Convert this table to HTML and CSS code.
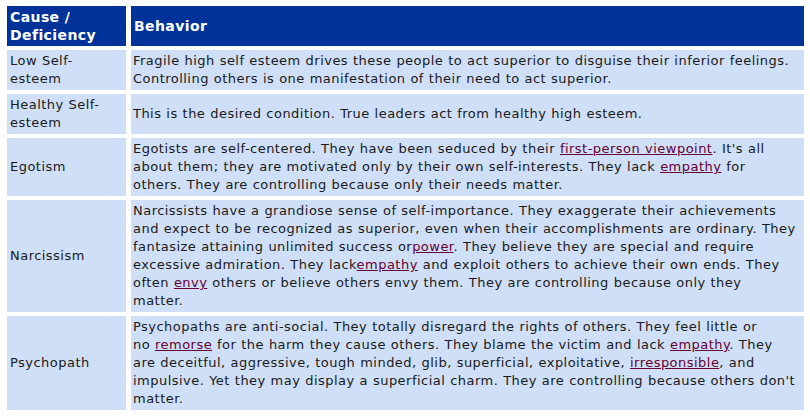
FILE: index.html
```html
<!DOCTYPE html>
<html>
<head>
<meta charset="utf-8">
<link rel="stylesheet" href="styles.css">
</head>
<body>
<table class="grid">
  <colgroup><col class="c1"><col class="c2"></colgroup>
  <thead>
    <tr><th>Cause /<br>Deficiency</th><th>Behavior</th></tr>
  </thead>
  <tbody>
    <tr><td>Low Self-<br>esteem</td><td class="lines">Fragile high self esteem drives these people to act superior to disguise their inferior feelings.<br>Controlling others is one manifestation of their need to act superior.</td></tr>
    <tr><td>Healthy Self-<br>esteem</td><td class="lines">This is the desired condition. True leaders act from healthy high esteem.</td></tr>
    <tr><td>Egotism</td><td class="lines">Egotists are self-centered. They have been seduced by their <a href="#">first-person viewpoint</a>. It's all<br>about them; they are motivated only by their own self-interests. They lack <a href="#">empathy</a> for<br>others. They are controlling because only their needs matter.</td></tr>
    <tr><td>Narcissism</td><td class="lines">Narcissists have a grandiose sense of self-importance. They exaggerate their achievements<br>and expect to be recognized as superior, even when their accomplishments are ordinary. They<br>fantasize attaining unlimited success or<a href="#">power</a>. They believe they are special and require<br>excessive admiration. They lack<a href="#">empathy</a> and exploit others to achieve their own ends. They<br>often <a href="#">envy</a> others or believe others envy them. They are controlling because only they<br>matter.</td></tr>
    <tr><td>Psychopath</td><td class="lines">Psychopaths are anti-social. They totally disregard the rights of others. They feel little or<br>no <a href="#">remorse</a> for the harm they cause others. They blame the victim and lack <a href="#">empathy</a>. They<br>are deceitful, aggressive, tough minded, glib, superficial, exploitative, <a href="#">irresponsible</a>, and<br>impulsive. Yet they may display a superficial charm. They are controlling because others don't<br>matter.</td></tr>
  </tbody>
</table>
</body>
</html>
```
FILE: styles.css
```css
html, body {
  margin: 0;
  padding: 0;
  background: #ffffff;
}
body {
  font-family: "DejaVu Sans", Verdana, sans-serif;
  font-size: 13px;
  line-height: 18px;
  letter-spacing: 0.47px;
  word-spacing: 0.3px;
  color: #1a1a1a;
}
.grid {
  margin: 2px 0 0 2px;
  width: 807px;
  border-spacing: 5px 4px;
  table-layout: fixed;
}
.c1 { width: 119px; }
.grid th {
  background: #003399;
  color: #ffffff;
  font-weight: bold;
  font-size: 14px;
  letter-spacing: 0.4px;
  word-spacing: 0;
  text-align: left;
  vertical-align: middle;
  padding: 2px 2px 2px 3px;
}
.grid td {
  background: #cfdff7;
  vertical-align: middle;
  padding: 2px 2px 2px 3px;
}
.grid td.lines {
  padding-left: 2px;
  white-space: nowrap;
}
.grid a {
  color: #660033;
  text-decoration: underline;
}
```
